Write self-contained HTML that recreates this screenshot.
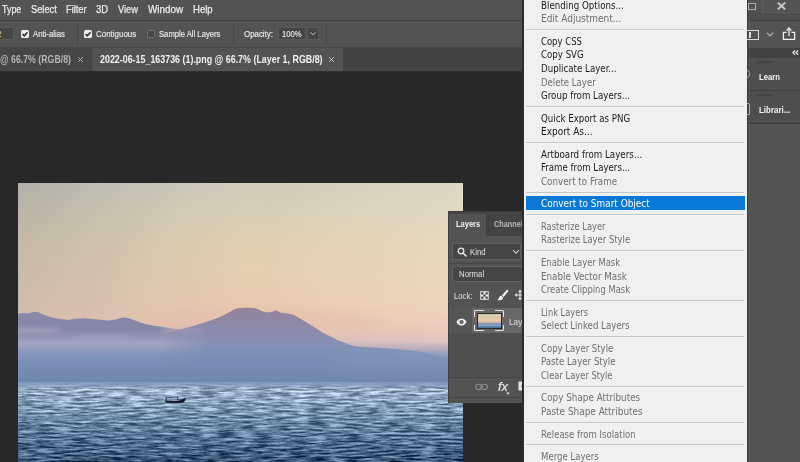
<!DOCTYPE html>
<html>
<head>
<meta charset="utf-8">
<title>Photoshop - Convert to Smart Object</title>
<style>
*{box-sizing:border-box;margin:0;padding:0}
html,body{width:800px;height:462px;overflow:hidden;background:#282828}
body{position:relative;font-family:"Liberation Sans",sans-serif;color:#e4e4e4;font-size:12px}
.abs{position:absolute}
.t{position:absolute;white-space:nowrap;transform-origin:0 50%;display:block}
.mb{font-size:10.5px;line-height:14px;color:#ececec;-webkit-text-stroke:0.25px #ececec}
.op{font-size:9px;line-height:12px;color:#ebebeb;-webkit-text-stroke:0.15px #ebebeb}
.tb{font-size:10px;line-height:12px;font-weight:bold;color:#f2f2f2}
.tbg{font-size:10px;line-height:12px;font-weight:bold;color:#b4b4b4}
.pn{font-size:9px;line-height:12px;font-weight:bold;color:#f4f4f4}
.pg{font-size:9px;line-height:12px;font-weight:bold;color:#b9b9b9}
.fx{font-style:italic;font-size:13px;line-height:14px;color:#e8e8e8;-webkit-text-stroke:0.2px #e8e8e8}
.tol{color:#e0a060}
.lp{font-size:9px;line-height:12px;color:#e0e0e0}
#menubar{left:0;top:0;width:800px;height:20px;background:#535353}
#line1{left:0;top:20px;width:800px;height:1px;background:#414141}
#options{left:0;top:21px;width:800px;height:27px;background:#535353}
#line2{left:0;top:46.5px;width:800px;height:1px;background:#464646}
#tabbar{left:0;top:47.5px;width:800px;height:23.7px;background:#424242}
#tab1{left:0;top:47.5px;width:91px;height:23.7px;background:#464646}
#tab2{left:92px;top:47.5px;width:251.3px;height:23.7px;background:#535353}
.cb{position:absolute;top:30px;width:8px;height:8px;border-radius:1.5px;background:#ececec}
.cb.off{background:#474747;border:1px solid #747474}
.vsep{position:absolute;top:24px;width:1px;height:20px;background:#474747}
.fld{position:absolute;background:#454545;border:1px solid #595959}
#photo{left:18px;top:183px;width:445px;height:279px;overflow:hidden}
#layers{left:448px;top:211px;width:78px;height:192px;background:#535353;overflow:hidden}
#menu{left:524px;top:0;width:223px;height:462px;background:#f0f0f0;overflow:hidden;font-family:"DejaVu Sans Condensed","DejaVu Sans","Liberation Sans",sans-serif}
#menuedge{left:522px;top:0;width:2px;height:462px;background:#2c2c2c}
.mi{position:absolute;left:2px;width:218.8px;height:13.4px;line-height:14.9px;padding-left:15px;font-size:10.5px;color:#1b1b1b;white-space:nowrap}
.mi .t.m{position:static;display:inline-block}
.mi.dis{color:#6f6f6f}
.mi.hl{background:#0a78d6;color:#fff}
.sep{position:absolute;left:2px;width:218.3px;height:1px;background:#c6c6c6;box-shadow:0 1px 0 #f6f6f6}
#right{left:746px;top:0;width:54px;height:462px;background:#535353;overflow:hidden}
</style>
</head>
<body>
<div id="menubar" class="abs"></div>
<span class="t mb" style="left:2px;top:2.2px;transform:scaleX(0.8478)">Type</span><span class="t mb" style="left:31.3px;top:2.2px;transform:scaleX(0.8839)">Select</span><span class="t mb" style="left:66px;top:2.2px;transform:scaleX(0.8825)">Filter</span><span class="t mb" style="left:96px;top:2.2px;transform:scaleX(0.9079)">3D</span><span class="t mb" style="left:118px;top:2.2px;transform:scaleX(0.8858)">View</span><span class="t mb" style="left:147.5px;top:2.2px;transform:scaleX(0.9422)">Window</span><span class="t mb" style="left:192.6px;top:2.2px;transform:scaleX(0.9070)">Help</span>
<div id="line1" class="abs"></div>
<div id="options" class="abs"></div>
<div class="fld" style="left:-2px;top:26.5px;width:16px;height:13.5px"></div>
<span class="t op tol" style="left:-8px;top:28px;transform:scaleX(0.9485)">32</span>
<div class="cb" style="left:21px"><svg width="8" height="8" viewBox="0 0 8 8" style="display:block"><path d="M1.6 4.1 L3.3 5.8 L6.5 2.2" fill="none" stroke="#2c2c2c" stroke-width="1.5"/></svg></div>
<span class="t op" style="left:33.2px;top:28px;transform:scaleX(0.8591)">Anti-alias</span>
<div class="vsep" style="left:77px"></div>
<div class="cb" style="left:84px"><svg width="8" height="8" viewBox="0 0 8 8" style="display:block"><path d="M1.6 4.1 L3.3 5.8 L6.5 2.2" fill="none" stroke="#2c2c2c" stroke-width="1.5"/></svg></div>
<span class="t op" style="left:96.1px;top:28px;transform:scaleX(0.8826)">Contiguous</span>
<div class="cb off" style="left:147px"></div>
<span class="t op" style="left:158.6px;top:28px;transform:scaleX(0.8522)">Sample All Layers</span>
<div class="vsep" style="left:233px"></div>
<span class="t op" style="left:243.9px;top:28px;transform:scaleX(0.8753)">Opacity:</span>
<div class="fld" style="left:278px;top:27px;width:28px;height:13px"></div>
<span class="t op" style="left:281.6px;top:28px;transform:scaleX(0.8467)">100%</span>
<div class="fld" style="left:307px;top:27px;width:12px;height:13px"><svg width="10" height="11" viewBox="0 0 10 11" style="display:block"><path d="M2.4 4.4 L5 6.8 L7.6 4.4" fill="none" stroke="#cfcfcf" stroke-width="0.9"/></svg></div>
<div class="vsep" style="left:326px"></div>
<div id="line2" class="abs"></div>
<div id="tabbar" class="abs"></div>
<div id="tab1" class="abs"></div>
<div id="tab2" class="abs"></div>
<div class="abs" style="left:0;top:71px;width:524px;height:0.8px;background:#303030"></div>
<span class="t tbg" style="left:0px;top:53.5px;transform:scaleX(0.8777)">@ 66.7% (RGB/8)</span>
<svg class="abs" style="left:77px;top:56px" width="7" height="7" viewBox="0 0 7 7"><path d="M1.1 1.1 L5.9 5.9 M5.9 1.1 L1.1 5.9" stroke="#b0b0b0" stroke-width="1" fill="none"/></svg>
<span class="t tb" style="left:100.4px;top:53.5px;transform:scaleX(0.8888)">2022-06-15_163736 (1).png @ 66.7% (Layer 1, RGB/8)</span>
<svg class="abs" style="left:327.8px;top:56px" width="7" height="7" viewBox="0 0 7 7"><path d="M1.1 1.1 L5.9 5.9 M5.9 1.1 L1.1 5.9" stroke="#c8c8c8" stroke-width="1" fill="none"/></svg>
<div id="photo" class="abs">
<svg width="445" height="279" viewBox="0 0 445 279" style="display:block">
<defs>
<linearGradient id="sky" gradientUnits="userSpaceOnUse" x1="0" y1="0" x2="0" y2="200">
<stop offset="0" stop-color="#cfccbc"/>
<stop offset="0.145" stop-color="#d8cfb6"/>
<stop offset="0.29" stop-color="#e0d0b0"/>
<stop offset="0.435" stop-color="#e4cfb0"/>
<stop offset="0.58" stop-color="#e8ccb0"/>
<stop offset="0.675" stop-color="#e8c8b1"/>
<stop offset="0.74" stop-color="#e5c3b3"/>
<stop offset="0.79" stop-color="#dbbdbb"/>
<stop offset="0.83" stop-color="#b8acbe"/>
<stop offset="0.87" stop-color="#8f9bbf"/>
<stop offset="1" stop-color="#7c92b9"/>
</linearGradient>
<linearGradient id="lr" x1="0" y1="0" x2="1" y2="0">
<stop offset="0" stop-color="#6a7a9a" stop-opacity="0.17"/>
<stop offset="0.5" stop-color="#6a7a9a" stop-opacity="0"/>
<stop offset="0.55" stop-color="#fff6e0" stop-opacity="0"/>
<stop offset="1" stop-color="#fff6e0" stop-opacity="0.28"/>
</linearGradient>
<radialGradient id="tl" gradientUnits="userSpaceOnUse" cx="0" cy="0" r="170">
<stop offset="0" stop-color="#7a746c" stop-opacity="0.17"/>
<stop offset="0.5" stop-color="#7a746c" stop-opacity="0.07"/>
<stop offset="1" stop-color="#7a746c" stop-opacity="0"/>
</radialGradient>
<linearGradient id="lrm" gradientUnits="userSpaceOnUse" x1="0" y1="0" x2="0" y2="200">
<stop offset="0" stop-color="#fff"/>
<stop offset="0.6" stop-color="#fff"/>
<stop offset="0.85" stop-color="#fff" stop-opacity="0.3"/>
<stop offset="1" stop-color="#fff" stop-opacity="0.2"/>
</linearGradient>
<mask id="mk"><rect width="445" height="200" fill="url(#lrm)"/></mask>
<linearGradient id="sea" gradientUnits="userSpaceOnUse" x1="0" y1="199" x2="0" y2="279">
<stop offset="0" stop-color="#809ab6"/>
<stop offset="0.05" stop-color="#86a0bb"/>
<stop offset="0.1" stop-color="#98b0c6"/>
<stop offset="0.25" stop-color="#88a2bb"/>
<stop offset="0.45" stop-color="#6e8ba8"/>
<stop offset="0.7" stop-color="#557394"/>
<stop offset="0.9" stop-color="#436080"/>
<stop offset="1" stop-color="#385474"/>
</linearGradient>
<linearGradient id="hsm" gradientUnits="userSpaceOnUse" x1="0" y1="199" x2="0" y2="206">
<stop offset="0" stop-color="#7f9bbb"/>
<stop offset="0.4" stop-color="#859fbe" stop-opacity="0.8"/>
<stop offset="1" stop-color="#8fa9c5" stop-opacity="0"/>
</linearGradient>
<linearGradient id="hz" gradientUnits="userSpaceOnUse" x1="0" y1="170" x2="0" y2="200">
<stop offset="0" stop-color="#7b90b7" stop-opacity="0.5"/>
<stop offset="0.5" stop-color="#768cb2" stop-opacity="0.8"/>
<stop offset="1" stop-color="#7087ac"/>
</linearGradient>
<linearGradient id="cld" gradientUnits="userSpaceOnUse" x1="0" y1="128" x2="0" y2="180">
<stop offset="0" stop-color="#8989a7"/>
<stop offset="0.36" stop-color="#8587a7"/>
<stop offset="0.5" stop-color="#9496b5"/>
<stop offset="0.62" stop-color="#a3a6c3"/>
<stop offset="0.8" stop-color="#8c99bd"/>
<stop offset="1" stop-color="#7f92b9"/>
</linearGradient>
<linearGradient id="cfade" gradientUnits="userSpaceOnUse" x1="140" y1="0" x2="190" y2="0">
<stop offset="0" stop-color="#fff"/>
<stop offset="1" stop-color="#fff" stop-opacity="0"/>
</linearGradient>
<mask id="cmk"><rect x="-10" y="100" width="210" height="100" fill="url(#cfade)"/></mask>
<linearGradient id="mtn" gradientUnits="userSpaceOnUse" x1="0" y1="125" x2="0" y2="200">
<stop offset="0" stop-color="#93849b"/>
<stop offset="0.13" stop-color="#9087a4"/>
<stop offset="0.3" stop-color="#8c8bac"/>
<stop offset="0.47" stop-color="#8791b6"/>
<stop offset="0.67" stop-color="#7b90b7"/>
<stop offset="0.87" stop-color="#758cb2"/>
<stop offset="1" stop-color="#6f86ab"/>
</linearGradient>
<filter id="b1" filterUnits="userSpaceOnUse" x="-20" y="-20" width="485" height="320"><feGaussianBlur stdDeviation="0.7"/></filter>
<filter id="b2" filterUnits="userSpaceOnUse" x="-20" y="-20" width="485" height="320"><feGaussianBlur stdDeviation="2"/></filter>
<filter id="b4" filterUnits="userSpaceOnUse" x="-20" y="-20" width="485" height="320"><feGaussianBlur stdDeviation="4"/></filter>
<filter id="wv" x="0" y="0" width="100%" height="100%" color-interpolation-filters="sRGB">
<feTurbulence type="fractalNoise" baseFrequency="0.055 0.5" numOctaves="5" seed="11" result="n"/>
<feColorMatrix in="n" type="matrix" values="2.2 0 0 0 -0.6  2.2 0 0 0 -0.6  2.2 0 0 0 -0.6  0 0 0 0 1" result="g"/>
<feComposite in="SourceGraphic" in2="g" operator="arithmetic" k1="0" k2="1" k3="0.46" k4="-0.23"/>
</filter>
</defs>
<rect width="445" height="200" fill="url(#sky)"/>
<rect width="445" height="200" fill="url(#lr)" mask="url(#mk)"/>
<rect width="445" height="200" fill="url(#tl)"/>
<!-- pink glow around the mountain -->
<ellipse cx="250" cy="138" rx="120" ry="14" fill="#e8b4a8" opacity="0.25" filter="url(#b4)"/>
<!-- mountain + distant ridge -->
<path d="M-5 158 L100 156 C130 154 157 148.5 175 143 C184 140.5 192 138 200 134.8 C207 131.5 213 128 218.8 125.4 C224 124.6 232 124.6 237.6 125.2 C241 126.5 244 128.5 247.7 129.2 C250 129.3 252 129.2 254 129 C255.5 128 257 127.3 258.3 127.5 C260 128 261 129 262 129.5 C266 130 271 130.5 275.3 131.7 C284 136 292 141.5 300 146.7 C308 151.5 317 156 325 159.3 C330 161.5 335 163 340 163.7 C360 164.5 380 166 400 168.5 C415 171 430 176 450 181 L450 205 L-5 205 Z" fill="url(#mtn)" filter="url(#b1)"/>
<!-- clouds left -->
<g mask="url(#cmk)">
<path d="M-5 131 C4 130 8 130.5 12 130 C16 128 20 128.5 24 131 C30 134 40 136 50 137 C56 136 62 135 69 135.5 C76 136 82 137 90 137.5 C96 137 100 136 104 134.5 C108 134 112 135.5 116 137 C122 140 130 142 138 143 C146 144 152 145.5 160 146 C170 146.5 180 147 195 148 L195 185 L-5 185 Z" fill="url(#cld)" filter="url(#b1)"/>
</g>
<ellipse cx="14" cy="147" rx="30" ry="2" fill="#bdb6ca" opacity="0.7" filter="url(#b2)"/>
<ellipse cx="85" cy="154" rx="30" ry="1.8" fill="#b0adc6" opacity="0.45" filter="url(#b2)"/>
<path d="M22 164 C50 170 90 170 130 164 C95 172 50 172 22 164 Z" fill="#a9abc6" opacity="0.55" filter="url(#b2)"/>
<ellipse cx="165" cy="147.5" rx="22" ry="1.5" fill="#c0b4c6" opacity="0.55" filter="url(#b2)"/>
<ellipse cx="400" cy="182" rx="90" ry="12" fill="#95a6c8" opacity="0.5" filter="url(#b4)"/>
<!-- haze band -->
<rect x="-10" y="170" width="465" height="36" fill="url(#hz)" filter="url(#b4)"/>
<!-- sea -->
<rect x="0" y="199" width="445" height="80" fill="url(#sea)" filter="url(#wv)"/>
<rect x="0" y="199" width="445" height="7" fill="url(#hsm)"/>
<!-- boat -->
<path d="M146.5 217.2 L160 218 L168.3 214.4 L166 219.4 C160 220.5 152 220.5 148 219.8 Z" fill="#1a1f36"/>
<path d="M147 214.9 L160.5 214 M148.2 215 V217.4 M159.6 214.2 V217.8" stroke="#252a42" stroke-width="0.8" fill="none"/>
</svg>

</div>
<div id="layers" class="abs">
<div class="abs" style="left:0;top:0;width:78px;height:1px;background:#3a3a3a"></div>
<div class="abs" style="left:0;top:0;width:1px;height:192px;background:#3f3f3f"></div>
<div class="abs" style="left:39px;top:1px;width:39px;height:24px;background:#434343"></div>
<div class="abs" style="left:38px;top:1px;width:1px;height:24px;background:#3c3c3c"></div>
<div class="abs" style="left:1px;top:1px;width:77px;height:2.2px;background:#444"></div>
<div class="fld" style="left:4px;top:32px;width:69px;height:17px;border-radius:2px;border-color:#616161"></div>
<svg class="abs" style="left:9px;top:36px" width="10" height="10" viewBox="0 0 10 10"><circle cx="4" cy="4" r="2.8" fill="none" stroke="#e8e8e8" stroke-width="1.3"/><path d="M6 6 L9 9" stroke="#e8e8e8" stroke-width="1.6" stroke-linecap="round"/></svg>
<svg class="abs" style="left:64px;top:38px" width="8" height="6" viewBox="0 0 8 6"><path d="M1 1.2 L4 4.2 L7 1.2" fill="none" stroke="#d0d0d0" stroke-width="1.1"/></svg>
<div class="abs" style="left:1px;top:52px;width:77px;height:1px;background:#474747"></div>
<div class="fld" style="left:4px;top:55px;width:80px;height:16px;border-radius:2px;border-color:#616161"></div>
<div class="abs" style="left:1px;top:97px;width:23px;height:25px;background:#555"></div>
<div class="abs" style="left:24px;top:97px;width:54px;height:25px;background:#676767"></div>
<div class="abs" style="left:1px;top:122px;width:77px;height:45px;background:#4f4f4f"></div>
<div class="abs" style="left:1px;top:166px;width:77px;height:1px;background:#454545"></div>
<div class="abs" style="left:1px;top:186px;width:77px;height:1px;background:#444"></div>
<!-- lock icons -->
<svg class="abs" style="left:32px;top:80px" width="9" height="9" viewBox="0 0 10 10"><rect x="0.3" y="0.3" width="9.4" height="9.4" fill="#f2f2f2"/><rect x="1.4" y="1.4" width="2.4" height="2.4" fill="#3a3a3a"/><rect x="6.2" y="1.4" width="2.4" height="2.4" fill="#3a3a3a"/><rect x="3.8" y="3.8" width="2.4" height="2.4" fill="#3a3a3a"/><rect x="1.4" y="6.2" width="2.4" height="2.4" fill="#3a3a3a"/><rect x="6.2" y="6.2" width="2.4" height="2.4" fill="#3a3a3a"/></svg>
<svg class="abs" style="left:49px;top:78px" width="12" height="12" viewBox="0 0 12 12"><path d="M10.2 0.6 L4.9 6.2 L6.7 8 L11.6 2 Z" fill="#ececec"/><path d="M4.5 6.8 C3 6.6 2 7.8 1.8 9.2 C1.6 10 1 10.6 0.4 10.9 C2.8 11.8 5.8 11 6.3 8.4 Z" fill="#ececec"/></svg>
<svg class="abs" style="left:66px;top:78px" width="12" height="12" viewBox="0 0 12 12"><path d="M6 0.5 L8 3 H6.6 V5.4 H9 V4 L11.5 6 L9 8 V6.6 H6.6 V9 H8 L6 11.5 L4 9 H5.4 V6.6 H3 V8 L0.5 6 L3 4 V5.4 H5.4 V3 H4 Z" fill="#e0e0e0"/></svg>
<!-- eye -->
<svg class="abs" style="left:8px;top:106.5px" width="11" height="8" viewBox="0 0 11 8"><path d="M0.3 4 C2 1.2 3.8 0.4 5.5 0.4 C7.2 0.4 9 1.2 10.7 4 C9 6.8 7.2 7.6 5.5 7.6 C3.8 7.6 2 6.8 0.3 4 Z" fill="#f0f0f0"/><circle cx="5.5" cy="4" r="2.1" fill="#535353"/><circle cx="5.5" cy="4" r="1" fill="#8a8a8a"/></svg>
<!-- thumbnail -->
<div class="abs" style="left:26.3px;top:99.2px;width:30px;height:21px;border:1.3px solid #e8e8e8;border-radius:1px"></div>
<div class="abs" style="left:36px;top:98px;width:11px;height:3px;background:#676767"></div>
<div class="abs" style="left:36px;top:118.5px;width:11px;height:3px;background:#676767"></div>
<div class="abs" style="left:25.5px;top:105.5px;width:3px;height:8.5px;background:#676767"></div>
<div class="abs" style="left:54.5px;top:105.5px;width:3px;height:8.5px;background:#676767"></div>
<div class="abs" style="left:28.9px;top:102px;width:24.8px;height:16.2px;border:0.6px solid #2a2a2a;background:linear-gradient(#cfc8b4 0%,#e0cba8 30%,#e6c3aa 52%,#c9aeb4 62%,#8a93b8 68%,#7a90b6 74%,#9ab4cf 78%,#6f8fb3 86%,#4a6890 100%)"></div>
<!-- footer icons -->
<svg class="abs" style="left:27px;top:172px" width="13" height="8" viewBox="0 0 13 8"><rect x="0.7" y="1.3" width="6" height="5.2" rx="2.6" fill="none" stroke="#8c8c8c" stroke-width="1.1"/><rect x="6.3" y="1.3" width="6" height="5.2" rx="2.6" fill="none" stroke="#8c8c8c" stroke-width="1.1"/><path d="M4.4 3.9 H8.6" stroke="#8c8c8c" stroke-width="1.1"/></svg>
<svg class="abs" style="left:70.2px;top:170px" width="10" height="11" viewBox="0 0 10 11"><rect x="0.5" y="0.5" width="9" height="9" fill="#e8e8e8"/><circle cx="6" cy="5" r="2.6" fill="#4a4a4a"/></svg>
<svg class="abs" style="left:57.6px;top:181.2px" width="4.4" height="3.6" viewBox="0 0 5 4"><path d="M0.3 0.5 H4.3 L2.3 3.2 Z" fill="#e8e8e8"/></svg>
</div>
<span class="t pn" style="left:456px;top:218.2px;transform:scaleX(0.8336)">Layers</span><span class="t pg" style="left:494px;top:218.2px;transform:scaleX(0.8145)">Channels</span>
<span class="t lp" style="left:469.7px;top:245.5px;transform:scaleX(0.8659)">Kind</span><span class="t lp" style="left:458.8px;top:268px;transform:scaleX(0.8685)">Normal</span><span class="t lp" style="left:453.8px;top:289.5px;transform:scaleX(0.8552)">Lock:</span>
<span class="t lp" style="left:509px;top:315.5px;transform:scaleX(0.9157)">Layer 1</span>
<span class="t fx" style="left:498.3px;top:380px;transform:scaleX(0.9877)">fx</span>
<div id="right" class="abs">
<div class="abs" style="left:0;top:58px;width:54px;height:65px;background:#4e4e4e"></div>
<div class="abs" style="left:1px;top:0;width:1px;height:462px;background:#3c3c3c"></div>
<div class="abs" style="left:0;top:20px;width:54px;height:1px;background:#414141"></div>
<div class="abs" style="left:0;top:47.5px;width:54px;height:10.5px;background:#424242"></div>
<div class="abs" style="left:0;top:90px;width:54px;height:1px;background:#414141"></div>
<div class="abs" style="left:0;top:123px;width:54px;height:1px;background:#3d3d3d"></div>
<div class="abs" style="left:16px;top:0;width:1px;height:13px;background:#5e5e5e"></div>
<div class="abs" style="left:2px;top:13px;width:52px;height:7px;background:#4e4e4e"></div>
<div class="abs" style="left:16px;top:12px;width:38px;height:1px;background:#5c5c5c"></div>
<!-- maximize -->
<div class="abs" style="left:2.2px;top:3.3px;width:7.8px;height:6.4px;border:1.7px solid #adadad"></div>
<!-- close X -->
<svg class="abs" style="left:31px;top:1.5px" width="9" height="8" viewBox="0 0 9 8"><path d="M0.8 0.6 L8.2 7.4 M8.2 0.6 L0.8 7.4" stroke="#cdcdcd" stroke-width="1.9" fill="none"/></svg>
<!-- workspace icon -->
<div class="abs" style="left:-1px;top:30px;width:14px;height:10px;border:1.2px solid #dcdcdc"></div>
<div class="abs" style="left:3px;top:32px;width:1.5px;height:6px;background:#dcdcdc"></div>
<svg class="abs" style="left:20px;top:32px" width="8" height="5" viewBox="0 0 8 5"><path d="M0.8 0.8 L4 3.8 L7.2 0.8" fill="none" stroke="#a4a4a4" stroke-width="1.4"/></svg>
<!-- share -->
<svg class="abs" style="left:35.6px;top:27px" width="14" height="14" viewBox="0 0 14 14"><path d="M4.6 5.4 H1.4 V12.4 H12.6 V5.4 H9.4" fill="none" stroke="#f0f0f0" stroke-width="1.3"/><path d="M7 9 V1.6" stroke="#f0f0f0" stroke-width="1.3" fill="none"/><path d="M4.6 3.6 L7 1 L9.4 3.6" fill="none" stroke="#f0f0f0" stroke-width="1.3"/></svg>
<!-- collapse -->
<svg class="abs" style="left:46px;top:49.6px" width="7" height="5.2" viewBox="0 0 8 6"><path d="M3.4 0.6 L1 3 L3.4 5.4 M7 0.6 L4.6 3 L7 5.4" fill="none" stroke="#f0f0f0" stroke-width="1.5"/></svg>
<!-- grips -->
<div class="abs" style="left:11px;top:61px;width:16px;height:2px;background:#444"></div>
<div class="abs" style="left:11px;top:94px;width:16px;height:2px;background:#444"></div>
<!-- panel icons (clipped by menu) -->
<div class="abs" style="left:-5.6px;top:69px;width:9.5px;height:9.5px;border:1px solid #a8a8a8;border-radius:50%"></div>
<div class="abs" style="left:-5.4px;top:103px;width:9.5px;height:12px;border:1px solid #a8a8a8;border-radius:1px"></div>
</div>
<span class="t pn" style="left:759px;top:70.8px;transform:scaleX(0.8566)">Learn</span><span class="t pn" style="left:759px;top:103.5px;transform:scaleX(0.8813)">Librari...</span>
<div id="menuedge" class="abs"></div>
<div id="menu" class="abs">
<div class="mi" style="top:-2.18px"><span class="t m" style="left:0px;top:0px;transform:scaleX(0.9203)">Blending Options...</span></div>
<div class="mi dis" style="top:11.36px"><span class="t m" style="left:0px;top:0px;transform:scaleX(0.9501)">Edit Adjustment...</span></div>
<div class="sep" style="top:29px"></div>
<div class="mi" style="top:33.92px"><span class="t m" style="left:0px;top:0px;transform:scaleX(0.8977)">Copy CSS</span></div>
<div class="mi" style="top:47.46px"><span class="t m" style="left:0px;top:0px;transform:scaleX(0.9134)">Copy SVG</span></div>
<div class="mi" style="top:61.00px"><span class="t m" style="left:0px;top:0px;transform:scaleX(0.9178)">Duplicate Layer...</span></div>
<div class="mi dis" style="top:74.54px"><span class="t m" style="left:0px;top:0px;transform:scaleX(0.9060)">Delete Layer</span></div>
<div class="mi" style="top:88.08px"><span class="t m" style="left:0px;top:0px;transform:scaleX(0.9190)">Group from Layers...</span></div>
<div class="sep" style="top:106px"></div>
<div class="mi" style="top:110.64px"><span class="t m" style="left:0px;top:0px;transform:scaleX(0.9146)">Quick Export as PNG</span></div>
<div class="mi" style="top:124.18px"><span class="t m" style="left:0px;top:0px;transform:scaleX(0.9485)">Export As...</span></div>
<div class="sep" style="top:142px"></div>
<div class="mi" style="top:146.74px"><span class="t m" style="left:0px;top:0px;transform:scaleX(0.9241)">Artboard from Layers...</span></div>
<div class="mi" style="top:160.28px"><span class="t m" style="left:0px;top:0px;transform:scaleX(0.9133)">Frame from Layers...</span></div>
<div class="mi dis" style="top:173.82px"><span class="t m" style="left:0px;top:0px;transform:scaleX(0.9259)">Convert to Frame</span></div>
<div class="sep" style="top:192px"></div>
<div class="mi hl" style="top:196.38px"><span class="t m" style="left:0px;top:0px;transform:scaleX(0.9438)">Convert to Smart Object</span></div>
<div class="sep" style="top:214px"></div>
<div class="mi dis" style="top:218.94px"><span class="t m" style="left:0px;top:0px;transform:scaleX(0.8815)">Rasterize Layer</span></div>
<div class="mi dis" style="top:232.48px"><span class="t m" style="left:0px;top:0px;transform:scaleX(0.8918)">Rasterize Layer Style</span></div>
<div class="sep" style="top:250px"></div>
<div class="mi dis" style="top:255.04px"><span class="t m" style="left:0px;top:0px;transform:scaleX(0.8902)">Enable Layer Mask</span></div>
<div class="mi dis" style="top:268.58px"><span class="t m" style="left:0px;top:0px;transform:scaleX(0.9283)">Enable Vector Mask</span></div>
<div class="mi dis" style="top:282.12px"><span class="t m" style="left:0px;top:0px;transform:scaleX(0.8896)">Create Clipping Mask</span></div>
<div class="sep" style="top:300px"></div>
<div class="mi dis" style="top:304.68px"><span class="t m" style="left:0px;top:0px;transform:scaleX(0.8767)">Link Layers</span></div>
<div class="mi dis" style="top:318.22px"><span class="t m" style="left:0px;top:0px;transform:scaleX(0.9116)">Select Linked Layers</span></div>
<div class="sep" style="top:336px"></div>
<div class="mi dis" style="top:340.78px"><span class="t m" style="left:0px;top:0px;transform:scaleX(0.9034)">Copy Layer Style</span></div>
<div class="mi dis" style="top:354.32px"><span class="t m" style="left:0px;top:0px;transform:scaleX(0.9152)">Paste Layer Style</span></div>
<div class="mi dis" style="top:367.86px"><span class="t m" style="left:0px;top:0px;transform:scaleX(0.8853)">Clear Layer Style</span></div>
<div class="sep" style="top:386px"></div>
<div class="mi dis" style="top:390.42px"><span class="t m" style="left:0px;top:0px;transform:scaleX(0.9343)">Copy Shape Attributes</span></div>
<div class="mi dis" style="top:403.96px"><span class="t m" style="left:0px;top:0px;transform:scaleX(0.9447)">Paste Shape Attributes</span></div>
<div class="sep" style="top:422px"></div>
<div class="mi dis" style="top:426.52px"><span class="t m" style="left:0px;top:0px;transform:scaleX(0.9035)">Release from Isolation</span></div>
<div class="sep" style="top:444px"></div>
<div class="mi dis" style="top:449.08px"><span class="t m" style="left:0px;top:0px;transform:scaleX(0.9053)">Merge Layers</span></div>
</div>
</body>
</html>
